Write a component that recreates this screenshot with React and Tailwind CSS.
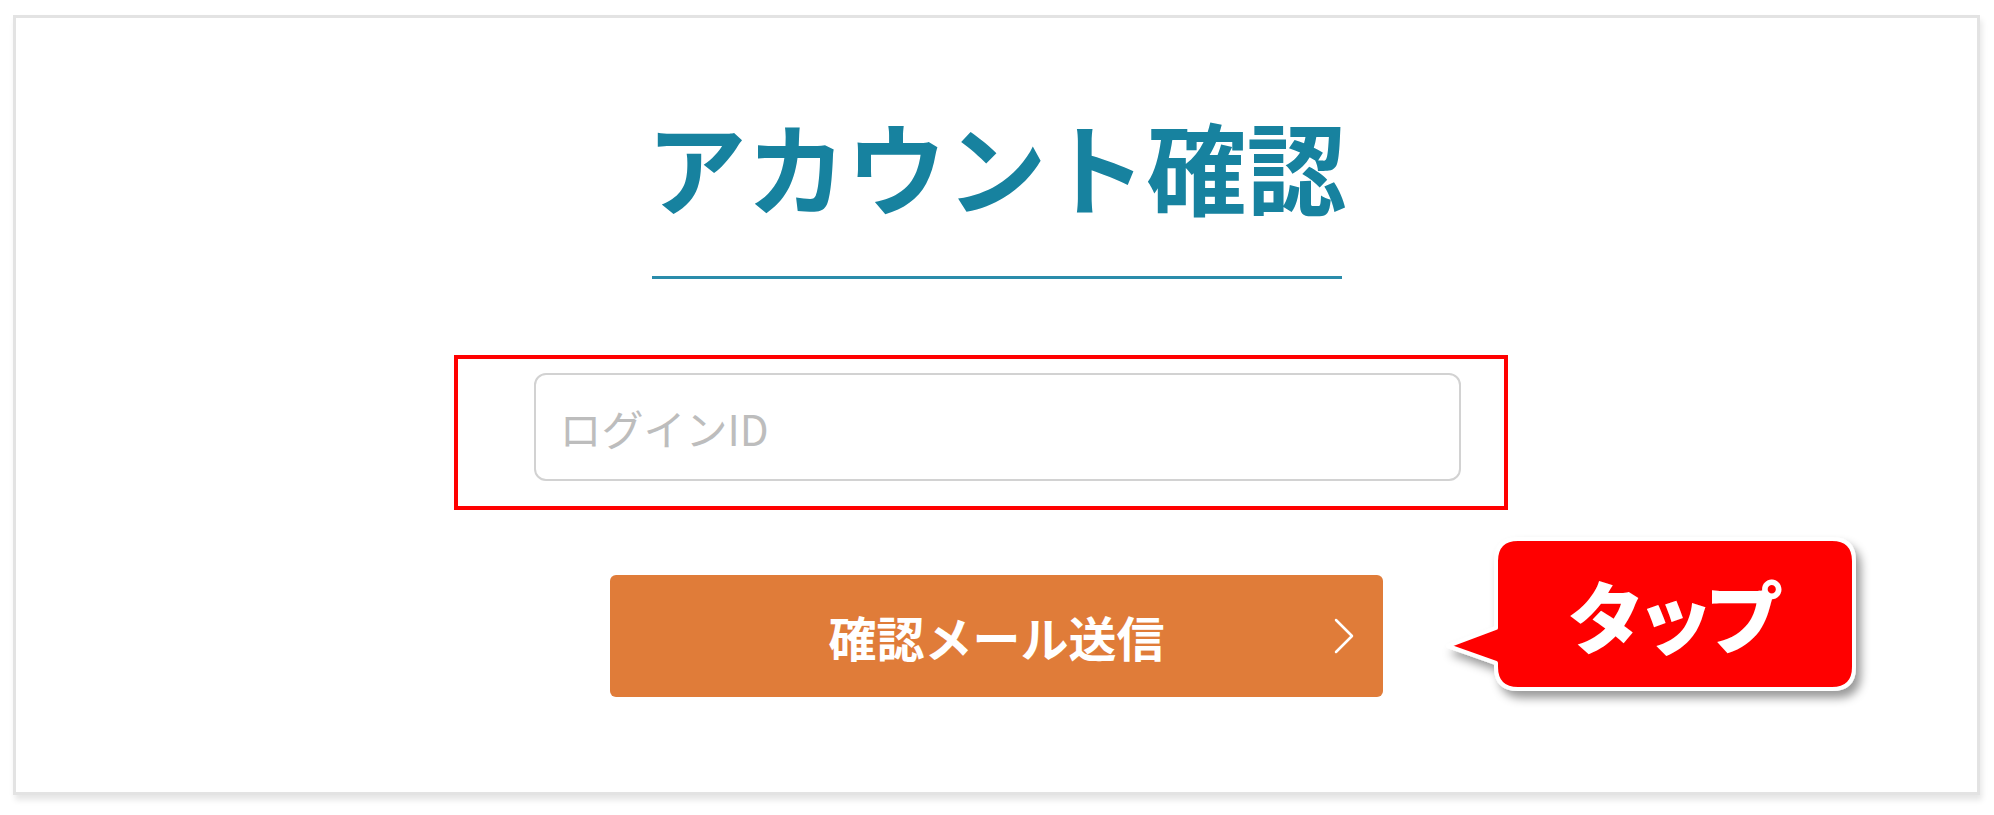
import React from 'react';

const font = { fontFamily: '"Noto Sans CJK JP", "Noto Sans", sans-serif' };

const TapCallout = () => (
  <div className="absolute left-[836px] top-[-39px] w-[400px] h-[160px]">
    <svg className="absolute inset-0 overflow-visible" width="400" height="160" viewBox="0 0 400 160">
      <defs>
        <filter id="callout-shadow" x="-10%" y="-10%" width="130%" height="140%">
          <feDropShadow dx="5" dy="7" stdDeviation="5" floodColor="#000" floodOpacity="0.4" />
        </filter>
      </defs>
      <path
        d="M72 3 H386 Q408 3 408 25 V131 Q408 153 386 153 H72 Q50 153 50 131 V127 L2 110 L50 92 V25 Q50 3 72 3 Z"
        fill="#ff0000"
        stroke="#ffffff"
        strokeWidth="4"
        strokeLinejoin="round"
        filter="url(#callout-shadow)"
      />
    </svg>
    <div className="absolute left-[50px] top-[3px] w-[358px] h-[150px] flex items-center justify-center">
      <span className="text-[78px] leading-none font-black text-white tracking-[-9px] pr-[9px]">タップ</span>
    </div>
  </div>
);

const App = () => {
  return (
    <div className="min-h-screen bg-white pt-[15px] pl-[13px]" style={font}>
      <div className="w-[1967px] h-[780px] border-[3px] border-[#e3e3e3] bg-white shadow-[2px_5px_6px_rgba(0,0,0,0.10)] flex flex-col items-center pt-[97px]">
        {/* Title */}
        <h1 className="text-[100px] leading-none font-bold text-[#17829f]">アカウント確認</h1>
        <div className="w-[690px] h-[3px] bg-[#2a8cab] mt-[61px]" />

        {/* Login ID field, highlighted */}
        <div className="mt-[76px] mr-[32px] w-[1054px] h-[155px] border-4 border-[#ff0000] pt-[14px] pl-[76px]">
          <input
            type="text"
            placeholder="ログインID"
            className="w-[927px] h-[108px] rounded-[12px] border-2 border-[#d2d2d2] pl-[24px] text-[42px] text-[#555] placeholder:text-[#bdbdbd] outline-none"
            style={font}
          />
        </div>

        {/* Submit */}
        <div className="relative mt-[65px]">
          <button
            type="button"
            className="relative w-[773px] h-[122px] bg-[#e07c39] rounded-[6px] flex items-center justify-center text-white font-bold text-[48px] leading-none"
            style={font}
          >
            確認メール送信
            <svg className="absolute right-[28px] top-1/2 -translate-y-1/2" width="22" height="36" viewBox="0 0 22 36" fill="none">
              <path d="M3 2 L19 18 L3 34" stroke="#fff" strokeWidth="2.5" strokeLinecap="round" strokeLinejoin="round" />
            </svg>
          </button>
          <TapCallout />
        </div>
      </div>
    </div>
  );
};

export default App;
